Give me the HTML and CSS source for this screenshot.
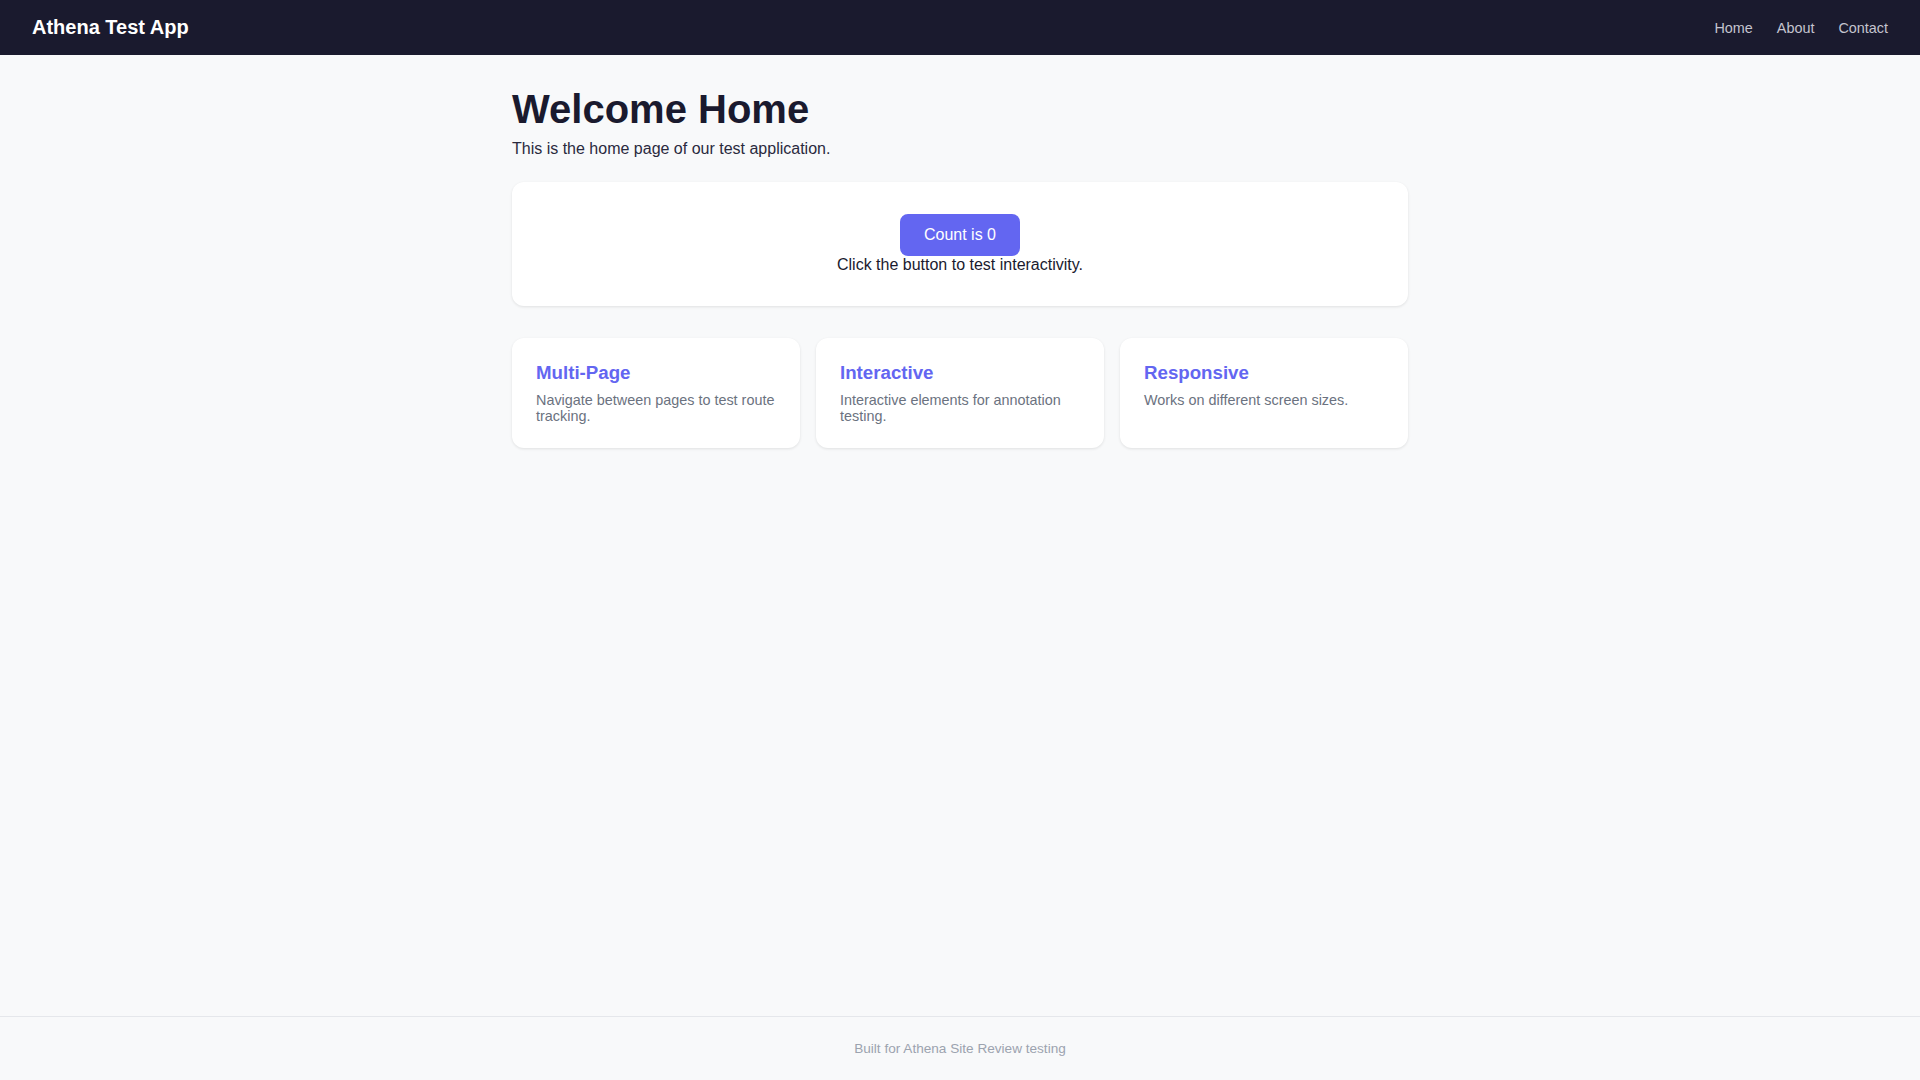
FILE: index.html
```html
<!DOCTYPE html>
<html lang="en">
<head>
<meta charset="utf-8">
<title>Athena Test App</title>
<link rel="stylesheet" href="styles.css">
</head>
<body>
<header class="site-header">
  <div class="brand">Athena Test App</div>
  <nav class="nav">
    <a href="#" class="nav-link">Home</a>
    <a href="#" class="nav-link">About</a>
    <a href="#" class="nav-link">Contact</a>
  </nav>
</header>
<main class="main">
  <h1 class="title">Welcome Home</h1>
  <p class="subtitle">This is the home page of our test application.</p>
  <section class="counter-card">
    <button class="count-btn" type="button">Count is 0</button>
    <p class="counter-text">Click the button to test interactivity.</p>
  </section>
  <section class="features">
    <div class="feature">
      <h3 class="feature-title">Multi-Page</h3>
      <p class="feature-text">Navigate between pages to test route tracking.</p>
    </div>
    <div class="feature">
      <h3 class="feature-title">Interactive</h3>
      <p class="feature-text">Interactive elements for annotation testing.</p>
    </div>
    <div class="feature">
      <h3 class="feature-title">Responsive</h3>
      <p class="feature-text">Works on different screen sizes.</p>
    </div>
  </section>
</main>
<footer class="site-footer">Built for Athena Site Review testing</footer>
</body>
</html>
```

FILE: styles.css
```css
* { box-sizing: border-box; }
html, body { margin: 0; padding: 0; }
body {
  font-family: "Liberation Sans", Arial, sans-serif;
  background: #f8f9fa;
  color: #1a1a2e;
  min-height: 100vh;
  display: flex;
  flex-direction: column;
}
.site-header {
  background: #1a1a2e;
  color: #fff;
  display: flex;
  align-items: center;
  justify-content: space-between;
  padding: 16px 32px;
  height: 55px;
}
.brand {
  font-size: 20px;
  font-weight: 700;
}
.nav {
  display: flex;
  gap: 24px;
}
.nav-link {
  color: #c4c4cf;
  text-decoration: none;
  font-size: 14.4px;
}
.main {
  flex: 1;
  width: 100%;
  max-width: 960px;
  margin: 0 auto;
  padding: 32px;
}
.title {
  margin: 0;
  font-size: 40px;
  font-weight: 700;
  color: #1a1a2e;
  line-height: normal;
}
.subtitle {
  margin: 8px 0 0;
  font-size: 16px;
  color: #2a2a3e;
}
.counter-card {
  margin-top: 24px;
  background: #fff;
  border-radius: 12px;
  padding: 32px;
  box-shadow: 0 1px 3px rgba(0,0,0,0.1);
  display: flex;
  flex-direction: column;
  align-items: center;
}
.count-btn {
  font-family: inherit;
  font-size: 16px;
  line-height: 18px;
  background: #6366f1;
  color: #fff;
  border: none;
  border-radius: 8px;
  padding: 12px 24px;
  cursor: pointer;
}
.counter-text {
  margin: 0;
  font-size: 16px;
  color: #1a1a2e;
}
.features {
  margin-top: 32px;
  display: grid;
  grid-template-columns: repeat(3, 1fr);
  gap: 16px;
}
.feature {
  background: #fff;
  border-radius: 12px;
  padding: 24px;
  box-shadow: 0 1px 3px rgba(0,0,0,0.1);
}
.feature-title {
  margin: 0 0 8px;
  font-size: 18.7px;
  font-weight: 700;
  color: #6366f1;
}
.feature-text {
  margin: 0;
  font-size: 14.4px;
  line-height: 16px;
  color: #6b7280;
}
.site-footer {
  border-top: 1px solid #e5e7eb;
  padding: 24px;
  text-align: center;
  font-size: 13.6px;
  color: #9ca3af;
}
```
